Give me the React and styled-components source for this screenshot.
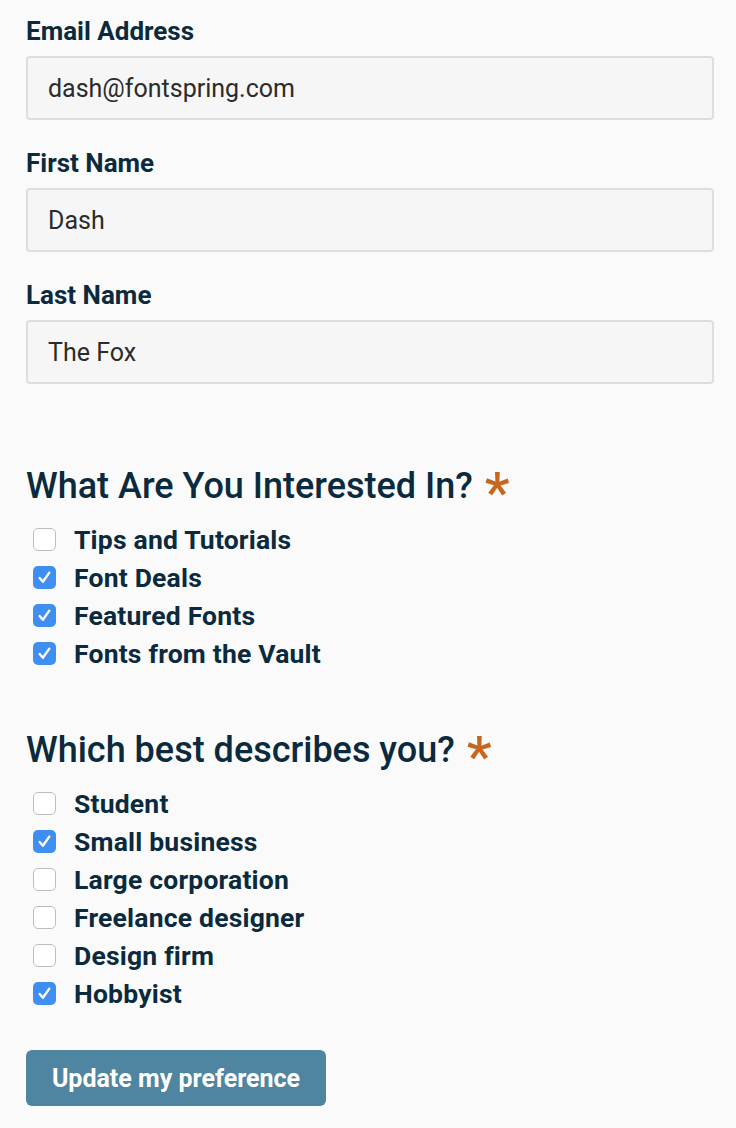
import React from "react";
import styled, { createGlobalStyle } from "styled-components";

const GlobalStyle = createGlobalStyle`
  html, body {
    margin: 0;
    padding: 0;
    background: #fafafa;
  }
  body {
    font-family: "Roboto", "Liberation Sans", sans-serif;
    color: #0b2a3d;
  }
`;

const Form = styled.form`
  display: flex;
  flex-direction: column;
  padding: 16px 22px 0 26px;
`;

const Field = styled.div`
  display: flex;
  flex-direction: column;
  margin-bottom: 28px;
`;

const Label = styled.label`
  font-size: 26px;
  font-weight: 700;
  line-height: 30px;
  margin-bottom: 10px;
  color: #0b2a3d;
`;

const Input = styled.input`
  box-sizing: border-box;
  height: 64px;
  width: 100%;
  padding: 0 20px;
  font-family: "Roboto", "Liberation Sans", sans-serif;
  font-size: 25px;
  color: #2b2b2b;
  background: #f6f6f6;
  border: 2px solid #dedede;
  border-radius: 4px;
  outline: none;
`;

const Group = styled.fieldset`
  border: 0;
  margin: ${(p) => (p.first ? "54px" : "58px")} 0 0;
  padding: 0;
`;

const Legend = styled.legend`
  padding: 0;
  font-size: 36px;
  font-weight: 500;
  line-height: 40px;
  margin-bottom: 14px;
  color: #0b2a3d;
`;

const Star = styled.span`
  color: #c8661e;
  font-size: 56px;
  line-height: 0;
  margin-left: 12px;
  vertical-align: -14px;
`;

const Option = styled.label`
  display: flex;
  align-items: center;
  gap: 18px;
  height: 38px;
  padding-left: 7px;
  font-size: 26.5px;
  font-weight: 700;
  letter-spacing: 0.2px;
  color: #0b2a3d;
`;

const Box = styled.span`
  box-sizing: border-box;
  flex: none;
  width: 23px;
  height: 23px;
  border-radius: 5px;
  display: flex;
  align-items: center;
  justify-content: center;
  background: ${(p) => (p.checked ? "#3f8ff2" : "#ffffff")};
  border: ${(p) => (p.checked ? "none" : "1.5px solid #bdbdbd")};
`;

const Button = styled.button`
  align-self: flex-start;
  margin-top: 38px;
  width: 300px;
  height: 56px;
  border: 0;
  border-radius: 6px;
  background: #4f85a1;
  color: #ffffff;
  font-family: "Roboto", "Liberation Sans", sans-serif;
  font-size: 25px;
  font-weight: 700;
`;

const Check = () => (
  <svg width="15" height="15" viewBox="0 0 14 14" fill="none">
    <path d="M2.5 7.5 L5.5 11 L11.5 2.5" stroke="#fff" strokeWidth="2.2" strokeLinecap="round" strokeLinejoin="round" />
  </svg>
);

const Checkbox = ({ label, checked }) => (
  <Option>
    <Box checked={checked}>{checked && <Check />}</Box>
    {label}
  </Option>
);

const interests = [
  ["Tips and Tutorials", false],
  ["Font Deals", true],
  ["Featured Fonts", true],
  ["Fonts from the Vault", true],
];

const roles = [
  ["Student", false],
  ["Small business", true],
  ["Large corporation", false],
  ["Freelance designer", false],
  ["Design firm", false],
  ["Hobbyist", true],
];

export default function App() {
  return (
    <>
      <GlobalStyle />
      <Form onSubmit={(e) => e.preventDefault()}>
        <Field>
          <Label>Email Address</Label>
          <Input defaultValue="dash@fontspring.com" />
        </Field>
        <Field>
          <Label>First Name</Label>
          <Input defaultValue="Dash" />
        </Field>
        <Field>
          <Label>Last Name</Label>
          <Input defaultValue="The Fox" />
        </Field>
        <Group first>
          <Legend>
            What Are You Interested In?<Star>*</Star>
          </Legend>
          {interests.map(([l, c]) => (
            <Checkbox key={l} label={l} checked={c} />
          ))}
        </Group>
        <Group>
          <Legend>
            Which best describes you?<Star>*</Star>
          </Legend>
          {roles.map(([l, c]) => (
            <Checkbox key={l} label={l} checked={c} />
          ))}
        </Group>
        <Button type="submit">Update my preference</Button>
      </Form>
    </>
  );
}
